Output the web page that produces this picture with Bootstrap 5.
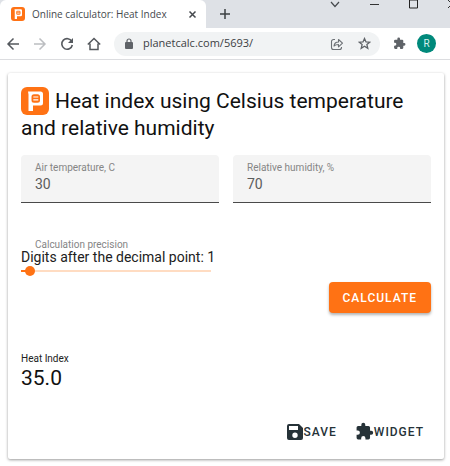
<!DOCTYPE html>
<html lang="en">
<head>
<meta charset="utf-8">
<meta name="viewport" content="width=device-width, initial-scale=1">
<title>Online calculator: Heat Index</title>
<link href="https://cdn.jsdelivr.net/npm/bootstrap@5.3.0/dist/css/bootstrap.min.css" rel="stylesheet">
<style>
body { font-family: Roboto, "Liberation Sans", sans-serif; color: #212121; background: #fff; overflow-x: hidden; }
svg { display: block; flex: none; }
.plain-btn { border: 0; padding: 0; background: none; color: #5f6368; display: block; flex: none; }
.chrome-ui { font-family: "Open Sans", "Noto Sans", sans-serif; }
.tab-strip { background: #dee1e6; height: 28px; }
.browser-tab { background: #fff; border-radius: 6px 6px 0 0; width: 206px; padding: 0 9px 0 11px; color: #45494d; font-size: 10px; }
.browser-tab .logo { margin-right: 7px; }
.new-tab { margin-left: 13px; }
.window-controls { gap: 28px; height: 10px; margin-right: -7px; }
.toolbar { height: 32px; border-bottom: 1px solid #dcdde0; padding: 0 14px 0 6px; gap: 13px; }
.address { background: #f1f3f4; border-radius: 12px; height: 24px; padding: 0 9px 0 10px; gap: 14px; }
.address input { border: 0; background: none; outline: 0; padding: 0; font-size: 11px; color: #3c4043; min-width: 0; margin-left: -5px; }
.nav-icons { gap: 13px; }
.avatar { width: 19px; height: 19px; background: #00897b; color: #d9f1ee; font: 10px/19px Roboto, sans-serif; margin-left: -2px; }
.calc-card { margin: 13px 6px 5px 8px; padding: 14px 13px 18px; border-radius: 2px; background: #fff; box-shadow: 0 1px 3px rgba(0,0,0,.4); }
.calc-title { font-size: 21px; line-height: 27px; color: #111; margin: 0 0 13px; font-weight: 400; }
.calc-title svg { display: inline-block; vertical-align: -7px; margin-right: 6px; }
.inputs { gap: 14px; margin-bottom: 36px; }
.filled { background: #f4f4f4; border-bottom: 1px solid #4a4a4a; border-radius: 4px 4px 0 0; padding: 7px 14px 8px; min-width: 0; }
.hint { display: block; font-size: 10px; line-height: 12px; color: #858585; }
.filled input { display: block; width: 100%; border: 0; background: none; outline: 0; padding: 0; font-size: 14px; line-height: 19px; height: 19px; color: #5c5c5c; margin-top: 1px; }
.precision { width: 190px; }
.precision .hint { padding-left: 14px; }
.digits { font-size: 14px; line-height: 12px; white-space: nowrap; }
.slider { appearance: none; -webkit-appearance: none; display: block; width: 100%; height: 10px; margin: 3px 0 0; background: linear-gradient(#ff7214, #ff7214) left center / 9px 2px no-repeat, linear-gradient(#ffdcc2, #ffdcc2) center / 100% 2px no-repeat; }
.slider::-webkit-slider-thumb { -webkit-appearance: none; width: 10px; height: 10px; border-radius: 50%; background: #ff7214; }
.calc-btn { --bs-btn-bg: #ff7214; --bs-btn-color: #fff; --bs-btn-hover-bg: #f06708; --bs-btn-hover-color: #fff; height: 31px; padding: 0 14px; border: 0; border-radius: 4px; font-size: 12px; font-weight: 500; letter-spacing: 1px; box-shadow: 0 2px 3px rgba(0,0,0,.3); margin: 6px 0 40px; }
.result-label { font-size: 10px; line-height: 12px; }
.result-value { font-size: 21px; line-height: 26px; color: #111; margin-bottom: 31px; }
.actions { gap: 18px; padding-right: 7px; }
.text-action { color: #263238; font-size: 12px; line-height: 18px; font-weight: 500; letter-spacing: 1px; border: 0; padding: 0; }
</style>
<script src="https://cdn.jsdelivr.net/npm/bootstrap@5.3.0/dist/js/bootstrap.bundle.min.js"></script>
</head>
<body>
<svg class="d-none" aria-hidden="true">
  <symbol id="logo" viewBox="0 0 28 28"><rect width="28" height="28" rx="6" fill="#ff7214"/><path fill="#fff" fill-rule="evenodd" d="M7 4.500h12.500a2.500 2.500 0 0 1 2.500 2.500v9a2.500 2.500 0 0 1-2.500 2.500H12V24H7.500V7.500zM13 7.300a2.500 2.500 0 0 0-2.500 2.500v3.400a2.500 2.500 0 0 0 2.500 2.500h3.500a2.500 2.500 0 0 0 2.500-2.500V9.800a2.500 2.500 0 0 0-2.500-2.500z"/><path d="M12.300 10h5M12.300 12.800h5" stroke="#fff" stroke-width="1.200"/></symbol>
  <symbol id="puzzle" viewBox="0 0 24 24"><path fill="currentColor" d="M20.500 11H19V7a2 2 0 0 0-2-2h-4V3.500a2.500 2.500 0 0 0-5 0V5H4a2 2 0 0 0-2 2v3.800h1.500a2.700 2.700 0 0 1 0 5.400H2V20a2 2 0 0 0 2 2h3.800v-1.500a2.700 2.700 0 0 1 5.400 0V22H17a2 2 0 0 0 2-2v-4h1.500a2.500 2.500 0 0 0 0-5z"/></symbol>
</svg>

<header class="chrome-ui">
  <div class="tab-strip d-flex">
    <div class="browser-tab d-flex align-items-center">
      <svg width="14" height="14" class="logo"><use href="#logo"/></svg>
      <span class="flex-grow-1 text-nowrap">Online calculator: Heat Index</span>
      <button class="plain-btn" aria-label="Close tab"><svg width="9" height="9" viewBox="0 0 9 9" stroke="#45494d" stroke-width="1.500"><path d="M1.500 1.500l6 6m0-6l-6 6"/></svg></button>
    </div>
    <button class="plain-btn new-tab" aria-label="New tab"><svg width="12" height="12" viewBox="0 0 12 12" stroke="#3c4043" stroke-width="1.500"><path d="M6 1v10M1 6h10"/></svg></button>
    <div class="window-controls d-flex align-items-start ms-auto">
      <button class="plain-btn" aria-label="Search tabs"><svg width="12" height="9" viewBox="0 0 12 9" fill="none" stroke="#45494d" stroke-width="1.200"><path d="M2 2l4 4.500L10 2"/></svg></button>
      <button class="plain-btn" aria-label="Minimize"><svg width="11" height="9" viewBox="0 0 11 9"><path d="M1 4.500h9" stroke="#333"/></svg></button>
      <button class="plain-btn" aria-label="Maximize"><svg width="11" height="9" viewBox="0 0 11 9"><path d="M1.500 0v8h8V0z" fill="none" stroke="#222"/></svg></button>
      <button class="plain-btn" aria-label="Close"><svg width="10" height="9" viewBox="0 0 10 9"><path d="M1 0l8 8m0-8l-8 8" stroke="#333"/></svg></button>
    </div>
  </div>
  <div class="toolbar d-flex align-items-center">
    <nav class="nav-icons d-flex" aria-label="Browser">
      <button class="plain-btn" aria-label="Back"><svg width="14" height="14" viewBox="0 0 14 14" fill="none" stroke="#55595e" stroke-width="1.500"><path d="M13 7H2m5.500-5.500L2 7l5.500 5.500"/></svg></button>
      <button class="plain-btn" aria-label="Forward"><svg width="14" height="14" viewBox="0 0 14 14" fill="none" stroke="#bcbec1" stroke-width="1.500"><path d="M1 7h11M6.500 1.500L12 7l-5.500 5.500"/></svg></button>
      <button class="plain-btn" aria-label="Reload"><svg width="14" height="14" viewBox="0 0 14 14" fill="none" stroke="#55595e" stroke-width="1.600"><path d="M11.800 4.500A5.300 5.300 0 1 0 12.300 8"/><path d="M13 1v5H8z" fill="#55595e" stroke="none"/></svg></button>
      <button class="plain-btn" aria-label="Home"><svg width="14" height="14" viewBox="0 0 14 14" fill="none" stroke="#55595e" stroke-width="1.500"><path d="M.8 7.500L7 1.500l6.200 6M3 6.500v6h8v-6"/></svg></button>
    </nav>
    <div class="address d-flex align-items-center flex-grow-1">
      <svg width="10" height="12" viewBox="0 0 10 12"><rect x="1" y="4" width="8" height="7" rx="1" fill="#5f6368"/><path d="M3 5V3a2 2 0 0 1 4 0v2" fill="none" stroke="#5f6368" stroke-width="1.200"/></svg>
      <input class="flex-grow-1" type="text" aria-label="Address" value="planetcalc.com/5693/">
      <button class="plain-btn" aria-label="Share"><svg width="14" height="14" viewBox="0 0 14 14" fill="none" stroke="#6c7075" stroke-width="1.100"><path d="M5 2.500H3.500A2 2 0 0 0 1.500 4.500v6a2 2 0 0 0 2 2h6a2 2 0 0 0 2-2V10"/><path d="M4 9q.5-4 4.500-4V2.500l4 3.700-4 3.600V7.500Q5.500 7.500 4 9z" stroke-linejoin="round"/></svg></button>
      <button class="plain-btn" aria-label="Bookmark"><svg width="13" height="13" viewBox="0 0 13 13" fill="none" stroke="#5f6368" stroke-width="1.300"><path d="M6.500 1.500l1.500 3.400 3.700.3-2.800 2.400.9 3.700-3.300-2-3.300 2 .9-3.700-2.800-2.400 3.700-.3z"/></svg></button>
    </div>
    <button class="plain-btn" aria-label="Extensions"><svg width="13" height="13"><use href="#puzzle"/></svg></button>
    <button class="plain-btn avatar rounded-circle text-center" aria-label="Profile R">R</button>
  </div>
</header>

<main class="calc-card">
  <h1 class="calc-title"><svg width="28" height="28" aria-hidden="true"><use href="#logo"/></svg>Heat index using Celsius temperature and relative humidity</h1>
  <form onsubmit="return false">
    <div class="inputs d-flex">
      <div class="filled flex-fill"><label class="hint" for="temp">Air temperature, C</label><input id="temp" type="text" value="30"></div>
      <div class="filled flex-fill"><label class="hint" for="humidity">Relative humidity, %</label><input id="humidity" type="text" value="70"></div>
    </div>
    <div class="precision">
      <label class="hint" for="precision">Calculation precision</label>
      <div class="digits">Digits after the decimal point: 1</div>
      <input class="slider" id="precision" type="range" min="0" max="50" value="1">
    </div>
    <div class="d-flex justify-content-end"><button class="btn calc-btn" type="submit">CALCULATE</button></div>
  </form>
  <div class="result-label">Heat Index</div>
  <div class="result-value">35.0</div>
  <div class="actions d-flex justify-content-end">
    <button class="btn text-action d-flex align-items-center"><svg width="18" height="18" viewBox="0 0 18 18"><path fill="#263238" fill-rule="evenodd" d="M3 1h10l4 4v10a2 2 0 0 1-2 2H3a2 2 0 0 1-2-2V3a2 2 0 0 1 2-2zm0 2v4h9V3zm6 6.500a2.700 2.700 0 1 0 0 5.400 2.700 2.700 0 0 0 0-5.400z"/></svg>SAVE</button>
    <button class="btn text-action d-flex align-items-center"><svg width="19" height="19"><use href="#puzzle"/></svg>WIDGET</button>
  </div>
</main>
</body>
</html>
